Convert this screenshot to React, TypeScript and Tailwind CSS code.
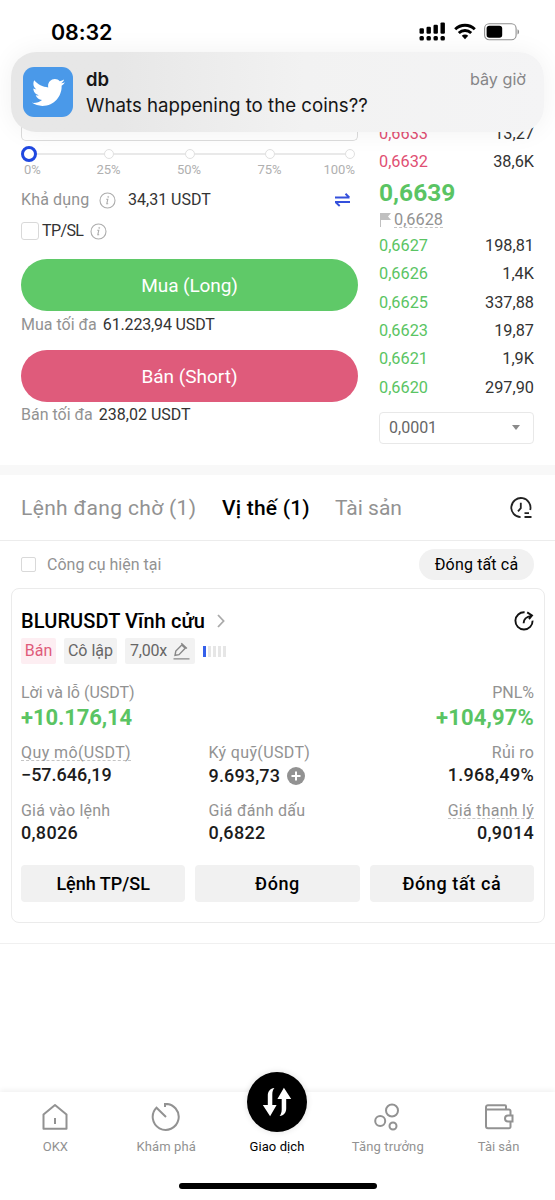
import { FaTwitter } from "react-icons/fa";

const steps = ["0%", "25%", "50%", "75%", "100%"];

const asks = [
  { price: "0,6633", size: "13,27" },
  { price: "0,6632", size: "38,6K" },
];

const bids = [
  { price: "0,6627", size: "198,81" },
  { price: "0,6626", size: "1,4K" },
  { price: "0,6625", size: "337,88" },
  { price: "0,6623", size: "19,87" },
  { price: "0,6621", size: "1,9K" },
  { price: "0,6620", size: "297,90" },
];

function InfoIcon() {
  return (
    <svg width="17" height="17" viewBox="0 0 17 17" fill="none" stroke="#adadad">
      <circle cx="8.5" cy="8.5" r="7.5" strokeWidth="1.1" />
      <path d="M7.2 7.2h1.6l-1 4.6h1.4" strokeWidth="1.1" />
      <circle cx="9.2" cy="4.9" r="0.6" fill="#adadad" strokeWidth="0.4" />
    </svg>
  );
}

function StatusBar() {
  return (
    <div className="flex h-[52px] items-start justify-between pl-[51px] pr-[35px] pt-[20px] font-['Inter',sans-serif] text-black">
      <span className="text-[21.5px] font-semibold leading-[24px] tracking-[-0.1px]">08:32</span>
      <div className="flex items-center gap-[8px] pt-[2px]">
        <svg width="27" height="19" viewBox="0 0 27 19">
          <g fill="#000">
            <rect x="0.5" y="6.2" width="4.4" height="5.6" rx="1.2" />
            <rect x="7.5" y="4.8" width="4.4" height="7" rx="1.2" />
            <rect x="14.5" y="2.8" width="4.4" height="9" rx="1.2" />
            <rect x="21.5" y="0.4" width="4.4" height="11.4" rx="1.2" />
            <rect x="0.5" y="14" width="4.4" height="4.4" rx="1.5" />
            <rect x="7.5" y="14" width="4.4" height="4.4" rx="1.5" />
            <rect x="14.5" y="14" width="4.4" height="4.4" rx="1.5" />
            <rect x="21.5" y="14" width="4.4" height="4.4" rx="1.5" />
          </g>
        </svg>
        <svg width="22" height="17" viewBox="0 0 22 17" fill="none" stroke="#000" strokeWidth="2.9">
          <path d="M1.2 6.2a14 14 0 0 1 19.6 0" />
          <path d="M4.8 10a9 9 0 0 1 12.4 0" />
          <path d="M11 16.2l-3.2-3.4a4.6 4.6 0 0 1 6.4 0z" fill="#000" stroke="none" />
        </svg>
        <svg width="36" height="18" viewBox="0 0 36 18">
          <rect x="0.6" y="0.8" width="31.5" height="16" rx="4.6" fill="#fff" stroke="#8f8f8f" strokeWidth="1.1" />
          <rect x="2.6" y="2.8" width="15.6" height="12" rx="2.8" fill="#000" />
          <path d="M33.5 6.2c2.1.8 2.1 4.4 0 5.2z" fill="#8f8f8f" />
        </svg>
      </div>
    </div>
  );
}

function Notification() {
  return (
    <div className="mx-[11px] flex h-[80px] items-center rounded-[25px] bg-linear-to-r from-[#e7e7e7] from-20% via-[#f2f2f2] via-55% to-[#f4f4f5] pl-[12px] pr-[18px] font-['Inter',sans-serif] shadow-[0_0_26px_rgba(0,0,0,0.06)]">
      <div className="flex size-[50px] items-center justify-center rounded-[11px] bg-[#4a99e9]">
        <FaTwitter className="size-[33px] text-white" />
      </div>
      <div className="ml-[13px] flex flex-1 flex-col whitespace-nowrap pt-px text-[#161616]">
        <div className="flex items-center justify-between leading-[26px]">
          <span className="text-[18.5px] font-semibold">db</span>
          <span className="text-[16.2px] text-[#868688]">bây giờ</span>
        </div>
        <span className="text-[18.7px] leading-[27px]">Whats happening to the coins??</span>
      </div>
    </div>
  );
}

function OrderForm() {
  return (
    <div className="flex w-[337px] flex-col">
      <div className="h-[22px] rounded-b-[5px] border-x border-b border-[#dcdcdc]" />
      <div className="flex h-[26px] items-center">
        <span className="relative -mr-[3px] size-[16px] shrink-0 rounded-full border-[3px] border-[#2048e0] bg-white" />
        {steps.slice(1).map((step) => (
          <div key={step} className="flex flex-1 items-center">
            <span className="h-[2px] flex-1 bg-[#e9e9e9]" />
            <span className="size-[10px] rounded-full border-[1.5px] border-[#e0e0e0] bg-white" />
          </div>
        ))}
        <span className="w-[3px]" />
      </div>
      <div className="flex h-[5px] items-center text-[13px] leading-none text-[#b0b0b0]">
        <span className="w-[75.5px] pl-[3px]">{steps[0]}</span>
        <span className="w-[80.5px]">{steps[1]}</span>
        <span className="w-[80.5px]">{steps[2]}</span>
        <span className="w-[66px]">{steps[3]}</span>
        <span>{steps[4]}</span>
      </div>
      <div className="mt-[12px] flex h-[32px] items-center text-[16px]">
        <span className="w-[78px] tracking-[0.15px] text-[#929292]">Khả dụng</span>
        <InfoIcon />
        <span className="ml-[12px] text-[#333]">34,31 USDT</span>
        <svg className="ml-auto mr-[8px]" width="15" height="14" viewBox="0 0 15 14" fill="none" stroke="#3450dc" strokeWidth="1.9">
          <path d="M0 4.5h14.500M10.500 .8l3.800 3.700M15 9h-15M.7 9.200l4 3.800" />
        </svg>
      </div>
      <div className="flex h-[30px] items-center text-[16px]">
        <span className="size-[18px] rounded-[3px] border-[1.5px] border-[#d9d9d9]" />
        <span className="ml-[3px] mr-[9px] w-[39px] tracking-[-0.6px] text-[#333]">TP/SL</span>
        <InfoIcon />
      </div>
      <button className="mt-[13px] h-[52px] rounded-full bg-[#5fc968] text-[19px] tracking-[-0.1px] text-white">
        Mua (Long)
      </button>
      <div className="flex h-[26px] items-center gap-[6px] pt-px text-[16px]">
        <span className="text-[#929292]">Mua tối đa</span>
        <span className="tracking-[-0.15px] text-[#333]">61.223,94 USDT</span>
      </div>
      <button className="mt-[13px] h-[52px] rounded-full bg-[#df5b7b] text-[19px] text-white">
        Bán (Short)
      </button>
      <div className="flex h-[26px] items-center gap-[6px] text-[16px]">
        <span className="text-[#929292]">Bán tối đa</span>
        <span className="text-[#333]">238,02 USDT</span>
      </div>
    </div>
  );
}

function OrderBook() {
  return (
    <div className="flex w-[155px] flex-col pt-[0.6px] text-[16.3px] text-[#333]">
      {asks.map((row) => (
        <div key={row.price} className="flex h-[28.2px] items-center justify-between">
          <span className="text-[#df4f73]">{row.price}</span>
          <span>{row.size}</span>
        </div>
      ))}
      <div className="flex h-[33.5px] items-center pt-px text-[24.5px] font-bold text-[#5ac463]">0,6639</div>
      <div className="flex h-[22px] items-center text-[#929292]">
        <svg className="mr-[3px]" width="12" height="14" viewBox="0 0 12 14">
          <path d="M1 0h11l-3 3.500 3 3.500h-10v7h-1z" fill="#c0c0c0" />
        </svg>
        <span className="border-b border-dashed border-[#c4c4c4] leading-[15px]">0,6628</span>
      </div>
      {bids.map((row) => (
        <div key={row.price} className="flex h-[28.4px] items-center justify-between pt-[0.8px]">
          <span className="text-[#5ac463]">{row.price}</span>
          <span>{row.size}</span>
        </div>
      ))}
      <div className="mt-[10px] flex h-[32px] items-center justify-between rounded-[4px] border-[1.5px] border-[#e8e8e8] pl-[9px] pr-[13px] text-[16px] text-[#666]">
        0,0001
        <svg width="8" height="5" viewBox="0 0 8 5">
          <path d="M0 0h8l-4 5z" fill="#8a8a8a" />
        </svg>
      </div>
    </div>
  );
}

function Tabs() {
  return (
    <div className="flex h-[66px] items-center border-b border-[#ececec] pl-[21px] pr-[23px] pt-px text-[21px] text-[#929292]">
      <span className="w-[201px] tracking-[0.35px]">Lệnh đang chờ (1)</span>
      <span className="w-[113px] font-medium tracking-[0.2px] text-black">Vị thế (1)</span>
      <span>Tài sản</span>
      <svg className="ml-auto" width="22" height="22" viewBox="0 0 22 22" fill="none" stroke="#222" strokeWidth="1.8">
        <path d="M10.6 20.2A9.6 9.6 0 1 1 20.2 13" />
        <path d="M10.8 5.8v5.4L8 14.4M14.5 16.2h4.5M14.5 20h7" />
      </svg>
    </div>
  );
}

function PositionCard() {
  return (
    <div className="mx-[10.5px] flex h-[335px] flex-col rounded-[8px] border-[1.5px] border-[#ebebeb] px-[9.5px] pt-[16px]">
      <div className="flex h-[31px] items-center justify-between">
        <div className="flex items-center text-[20px] font-medium tracking-[0.1px] text-black">
          BLURUSDT Vĩnh cửu
          <svg className="ml-[12px]" width="8" height="14" viewBox="0 0 8 14" fill="none" stroke="#aaa" strokeWidth="1.8">
            <path d="M1 1l5.6 6L1 13" />
          </svg>
        </div>
        <svg width="20" height="20" viewBox="0 0 20 20" fill="none" stroke="#111" strokeWidth="1.9">
          <path d="M10.6 1.3A8.6 8.6 0 1 0 18.6 9.6" />
          <path d="M9.600 12.200C9.600 8.200 12.500 5.600 17.800 4.600M13.200 1.400l4.800 3.100-3 3.700" />
        </svg>
      </div>
      <div className="mt-[2px] flex h-[26px] items-center text-[16px] text-[#666]">
        <span className="flex h-[26px] w-[35px] items-center justify-center rounded-[2px] bg-[#fdeef2] text-[#df5b7b]">Bán</span>
        <span className="ml-[8px] flex h-[26px] w-[53px] items-center justify-center rounded-[2px] bg-[#f2f2f2]">Cô lập</span>
        <span className="ml-[8px] flex h-[26px] w-[70px] items-center justify-between rounded-[2px] bg-[#f2f2f2] pl-[5px] pr-[5px]">
          <span className="tracking-[-0.2px]">7,00x</span>
          <svg width="17" height="18" viewBox="0 0 17 18" fill="none" stroke="#888" strokeWidth="1.4">
            <path d="M2 13.300l.8-4.300L8.800 3l3.400 3.200-6.200 6.500zM8.300 1.200l5.600 5.300M.5 16.900h16" />
          </svg>
        </span>
        <div className="ml-[7.5px] flex gap-[2px]">
          <span className="h-[11px] w-[3px] bg-[#3560ea]" />
          <span className="h-[11px] w-[3px] bg-[#e6e6e6]" />
          <span className="h-[11px] w-[3px] bg-[#e6e6e6]" />
          <span className="h-[11px] w-[3px] bg-[#e6e6e6]" />
          <span className="h-[11px] w-[3px] bg-[#e6e6e6]" />
        </div>
      </div>
      <div className="mt-[17px] flex h-[24px] items-center justify-between text-[16px] text-[#929292]">
        <span>Lời và lỗ (USDT)</span>
        <span>PNL%</span>
      </div>
      <div className="flex h-[26px] items-center justify-between text-[22px] font-bold text-[#5ac463]">
        <span className="tracking-[-0.1px]">+10.176,14</span>
        <span className="tracking-[0.15px]">+104,97%</span>
      </div>
      <div className="mt-[10px] flex h-[24px] items-center text-[16px] text-[#929292]">
        <span className="w-[187.5px]">
          <span className="inline-block border-b border-dashed border-[#c4c4c4] leading-[14px] tracking-[0.4px]">Quy mô(USDT)</span>
        </span>
        <span className="tracking-[0.35px]">Ký quỹ(USDT)</span>
        <span className="ml-auto tracking-[0.2px]">Rủi ro</span>
      </div>
      <div className="flex h-[22px] items-center text-[18px] font-medium text-[#1c1c1c]">
        <span className="-mt-[3px] w-[187.5px]">−57.646,19</span>
        <span className="tracking-[0.15px]">9.693,73</span>
        <svg className="ml-[7px]" width="18" height="18" viewBox="0 0 18 18">
          <circle cx="9" cy="9" r="9" fill="#929292" />
          <path d="M9 4.5v9M4.5 9h9" stroke="#fff" strokeWidth="2" />
        </svg>
        <span className="-mt-[3px] ml-auto tracking-[0.3px]">1.968,49%</span>
      </div>
      <div className="mt-[12px] flex h-[24px] items-center text-[16px] text-[#929292]">
        <span className="w-[187.5px] tracking-[0.2px]">Giá vào lệnh</span>
        <span className="tracking-[0.25px]">Giá đánh dấu</span>
        <span className="ml-auto border-b border-dashed border-[#c4c4c4] leading-[14px] tracking-[0.25px]">Giá thanh lý</span>
      </div>
      <div className="-mt-px flex h-[22px] items-center text-[18px] font-medium tracking-[0.3px] text-[#1c1c1c]">
        <span className="w-[187.5px]">0,8026</span>
        <span>0,6822</span>
        <span className="ml-auto">0,9014</span>
      </div>
      <div className="mt-[21px] grid grid-cols-3 gap-[10px] text-[18px] font-medium text-black">
        <button className="h-[37px] rounded-[4px] bg-[#f1f1f1]">Lệnh TP/SL</button>
        <button className="h-[37px] rounded-[4px] bg-[#f1f1f1] tracking-[0.6px]">Đóng</button>
        <button className="h-[37px] rounded-[4px] bg-[#f1f1f1] tracking-[0.6px]">Đóng tất cả</button>
      </div>
    </div>
  );
}

function BottomNav() {
  return (
    <div className="mt-auto flex h-[108px] flex-col items-center bg-white shadow-[0_-2px_5px_rgba(0,0,0,0.06)]">
      <div className="grid h-[64px] w-full grid-cols-5 grid-rows-[64px] pr-px text-[13px] leading-[18px] text-[#929292]">
        <div className="flex flex-col items-center justify-end">
          <svg className="mb-[5px]" width="30" height="30" viewBox="0 0 30 30" fill="none" stroke="#929292" strokeWidth="2">
            <path d="M3.5 11.5L15 2l11.5 9.5v14.2h-23zM15 15v6" strokeLinejoin="round" />
          </svg>
          OKX
        </div>
        <div className="flex flex-col items-center justify-end">
          <svg className="mb-[5px]" width="30" height="30" viewBox="0 0 30 30" fill="none" stroke="#929292" strokeWidth="2">
            <path d="M14 4V.9A13 13 0 1 1 5.500 4.700L15 14" />
          </svg>
          <span className="tracking-[0.1px]">Khám phá</span>
        </div>
        <div className="flex flex-col items-center justify-end text-black">
          <div className="mb-[6px] flex size-[60px] shrink-0 items-center justify-center rounded-full bg-black shadow-[0_0_6px_rgba(0,0,0,0.12)]">
            <svg width="30" height="30" viewBox="0 0 30 30" fill="#fff">
              <path d="M12.4 1C8 1.500 5.800 4.500 5.800 8.500V18H.8l7.300 11.300L14.600 18H10.300V7.500C10.300 4.800 11 2.700 12.400 1z" />
              <path d="M17.600 29c4.400-.5 6.600-3.500 6.600-7.500V12h5L21.900.7 15.400 12h4.300v10.500c0 2.700-.7 4.800-2.100 6.500z" />
            </svg>
          </div>
          <span className="tracking-[0.1px]">Giao dịch</span>
        </div>
        <div className="flex flex-col items-center justify-end">
          <svg className="mb-[5px]" width="30" height="30" viewBox="0 0 30 30" fill="none" stroke="#929292" strokeWidth="2">
            <circle cx="19" cy="7.500" r="6" />
            <circle cx="7.200" cy="18" r="5" />
            <circle cx="20" cy="23" r="3.500" />
          </svg>
          <span className="tracking-[0.15px]">Tăng trưởng</span>
        </div>
        <div className="flex flex-col items-center justify-end">
          <svg className="mb-[5px]" width="30" height="30" viewBox="0 0 30 30" fill="none" stroke="#929292" strokeWidth="2">
            <path d="M22 6V3.200a1 1 0 0 0-1-1H4a2 2 0 0 0-2 2v19a2 2 0 0 0 2 2h21a1.500 1.500 0 0 0 1.500-1.500V18.500M26.500 13V8a1.500 1.500 0 0 0-1.500-1.500H2.500" />
            <path d="M28.500 12.500h-4.500a3 3 0 0 0 0 6h4.500z" />
          </svg>
          Tài sản
        </div>
      </div>
      <div className="mt-[27px] h-[6px] w-[198px] rounded-full bg-black" />
    </div>
  );
}

export default function App() {
  return (
    <div className="relative flex h-[1200px] w-[555px] flex-col overflow-hidden whitespace-nowrap bg-white pt-[119px] font-['Roboto',sans-serif] leading-none">
      <div className="absolute inset-x-0 top-0 z-10">
        <StatusBar />
        <Notification />
      </div>

      <div className="flex h-[346px] justify-between pl-[21px] pr-[21px]">
        <OrderForm />
        <OrderBook />
      </div>
      <div className="h-[10px] bg-[#f8f8f8]" />
      <Tabs />

      <div className="flex h-[47px] items-center pl-[21px] pr-[21px] text-[16px]">
        <span className="size-[15px] rounded-[2px] border-[1.5px] border-[#d9d9d9]" />
        <span className="ml-[11px] text-[#929292]">Công cụ hiện tại</span>
        <span className="ml-auto flex h-[31px] w-[115px] items-center justify-center rounded-full bg-[#f1f1f1] tracking-[0.15px] text-black">
          Đóng tất cả
        </span>
      </div>
      <PositionCard />
      <div className="mt-[20px] h-px bg-[#f0f0f0]" />

      <BottomNav />
    </div>
  );
}
